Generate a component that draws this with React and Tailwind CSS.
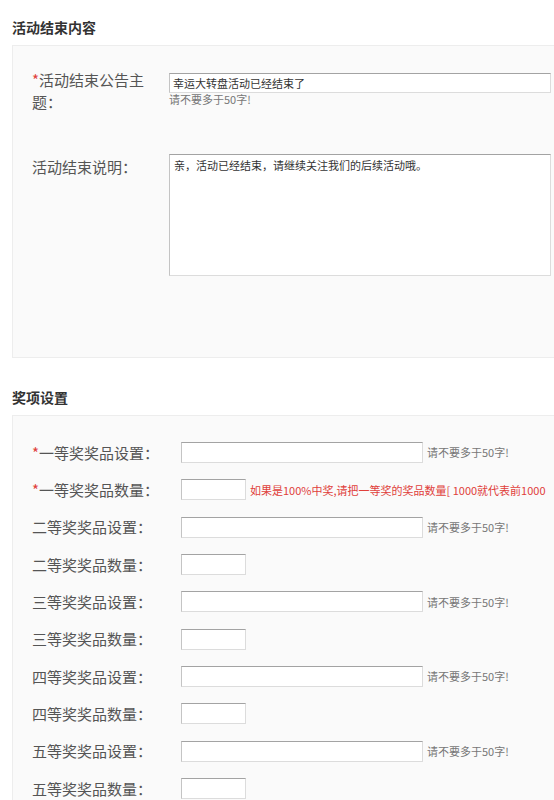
import React from 'react';

const inputBorder = 'border border-[#dcdcdc] border-t-[#a3a3a3] border-l-[#c4c4c4] bg-white';

const prizes = ['一', '二', '三', '四', '五'];

const PrizeRow = ({ label, required, long, children }) => (
  <div className="flex items-center h-[37.33px]">
    <div className="w-[149px] shrink-0 text-[15px] leading-[22px] text-[#555] whitespace-nowrap">
      {required && <span className="text-[#e0403a]">*</span>}
      {label}
    </div>
    <div className={`${inputBorder} h-[21px] ${long ? 'w-[242px]' : 'w-[65px]'} shrink-0`}></div>
    {children}
  </div>
);

const App = () => {
  return (
    <div
      className="w-[554px] h-[800px] overflow-hidden bg-white pl-3"
      style={{ fontFamily: '"Noto Sans CJK SC", "Microsoft YaHei", sans-serif' }}
    >
      {/* 活动结束内容 */}
      <h3 className="mt-[17px] mb-[8px] text-[14px] leading-[20px] font-bold text-[#333]">活动结束内容</h3>
      <div className="w-[560px] h-[313px] border border-[#ededed] bg-[#fafafa] pl-[19px] pt-[23px]">
        <div className="flex items-start">
          <div className="w-[120px] shrink-0 text-[15px] leading-[22px] text-[#555]">
            <span className="text-[#e0403a]">*</span>活动结束公告主题：
          </div>
          <div className="ml-[17px] mt-[4px]">
            <div className={`${inputBorder} w-[382px] h-[20px] px-[3px] text-[11px] leading-[18px] text-[#333]`}>
              幸运大转盘活动已经结束了
            </div>
            <div className="text-[11px] leading-[12px] text-[#777]">请不要多于50字!</div>
          </div>
        </div>
        <div className="flex items-start mt-[41px]">
          <div className="w-[120px] shrink-0 mt-[2px] text-[15px] leading-[22px] text-[#555]">活动结束说明：</div>
          <div className={`${inputBorder} ml-[17px] w-[382px] h-[122px] px-[4px] py-[2px] text-[11px] leading-[16px] text-[#333]`}>
            亲，活动已经结束，请继续关注我们的后续活动哦。
          </div>
        </div>
      </div>

      {/* 奖项设置 */}
      <h3 className="mt-[29px] mb-[8px] text-[14px] leading-[20px] font-bold text-[#333]">奖项设置</h3>
      <div className="w-[560px] h-[420px] border border-[#ededed] bg-[#fafafa] pl-[19px] pt-[18px]">
        {prizes.map((p, i) => (
          <React.Fragment key={p}>
            <PrizeRow label={`${p}等奖奖品设置：`} required={i === 0} long>
              <span className="ml-[4px] text-[11px] text-[#777] whitespace-nowrap">请不要多于50字!</span>
            </PrizeRow>
            <PrizeRow label={`${p}等奖奖品数量：`} required={i === 0}>
              {i === 0 && (
                <span className="ml-[4px] text-[11px] text-[#e0403a] whitespace-nowrap">
                  如果是100%中奖,请把一等奖的奖品数量[ 1000就代表前1000
                </span>
              )}
            </PrizeRow>
          </React.Fragment>
        ))}
      </div>
    </div>
  );
};

export default App;
